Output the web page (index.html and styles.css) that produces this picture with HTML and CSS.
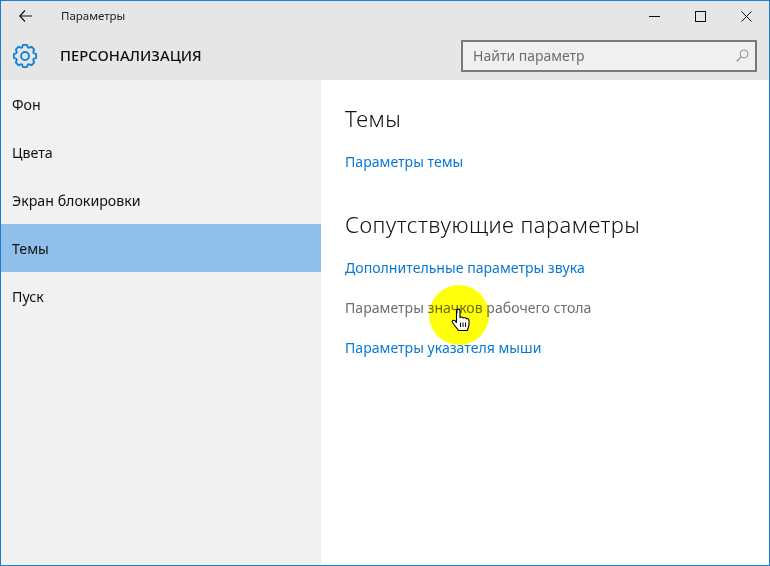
FILE: index.html
```html
<!DOCTYPE html>
<html lang="ru">
<head>
    <meta charset="UTF-8">
    <title>Параметры</title>
    <link rel="stylesheet" href="styles.css">
</head>
<body>
    <div class="window">
        <header class="header">
            <div class="title-bar">
                <svg class="back-icon" width="13" height="12" viewBox="0 0 13 12"><path d="M6 .5.8 6 6 11.500M.8 6H13" fill="none" stroke="#111" stroke-width="1.100"/></svg>
                <span class="app-title">Параметры</span>
                <div class="win-buttons">
                    <div class="win-btn"><svg width="11" height="11" viewBox="0 0 11 11"><path d="M0 5.500h11" stroke="#111" stroke-width="1"/></svg></div>
                    <div class="win-btn"><svg width="11" height="11" viewBox="0 0 11 11"><rect x=".5" y=".5" width="10" height="10" fill="none" stroke="#111"/></svg></div>
                    <div class="win-btn"><svg width="11" height="11" viewBox="0 0 11 11"><path d="M.5.5l10 10M10.500.5l-10 10" stroke="#111" stroke-width="1"/></svg></div>
                </div>
            </div>
            <div class="page-bar">
                <svg class="gear-icon" width="24" height="24" viewBox="0 0 24 24">
                    <defs><path id="tooth" d="M8.750 4.150 10.040.87h3.920l1.290 3.280"/></defs>
                    <g fill="none" stroke="#0f7fd8" stroke-width="1.800" stroke-linejoin="round">
                        <use href="#tooth"/>
                        <use href="#tooth" transform="rotate(45 12 12)"/>
                        <use href="#tooth" transform="rotate(90 12 12)"/>
                        <use href="#tooth" transform="rotate(135 12 12)"/>
                        <use href="#tooth" transform="rotate(180 12 12)"/>
                        <use href="#tooth" transform="rotate(225 12 12)"/>
                        <use href="#tooth" transform="rotate(270 12 12)"/>
                        <use href="#tooth" transform="rotate(315 12 12)"/>
                        <circle cx="12" cy="12" r="4"/>
                    </g>
                </svg>
                <h1 class="page-title">ПЕРСОНАЛИЗАЦИЯ</h1>
                <div class="search-box">
                    <span class="search-text">Найти параметр</span>
                    <svg width="13" height="13" viewBox="0 0 14 14"><circle cx="8.700" cy="5.300" r="4.300" fill="none" stroke="#8a8a8a"/><path d="M5.500 8.500.8 13.200" stroke="#8a8a8a" stroke-width="1.200"/></svg>
                </div>
            </div>
        </header>
        <div class="main">
            <nav class="sidebar">
                <div class="nav-item">Фон</div>
                <div class="nav-item">Цвета</div>
                <div class="nav-item">Экран блокировки</div>
                <div class="nav-item active">Темы</div>
                <div class="nav-item">Пуск</div>
            </nav>
            <section class="content">
                <h2 class="section-title">Темы</h2>
                <a class="link">Параметры темы</a>
                <h2 class="section-title related">Сопутствующие параметры</h2>
                <a class="link">Дополнительные параметры звука</a>
                <a class="link hovered">Параметры значков рабочего стола</a>
                <a class="link">Параметры указателя мыши</a>
            </section>
        </div>
        <div class="cursor-spot">
            <svg width="20" height="24" viewBox="0 0 20 24"><path d="M5.500 2.500C5.500.7 9 .7 9 2.500v7c1.500-.8 3-.6 3.300.5 1.200-.6 2.800-.3 3 .8 1-.4 2.500 0 2.700 1.200V17l-1.600 5.500H7.500l-6-8c-1-1.600 1-3 2.300-1.800l1.700 1.800z" fill="#fff" stroke="#000" stroke-width="1.100" stroke-linejoin="round"/><path d="M9.500 14.500v4.500M12 14.500v4.500M14.500 14.500v4.500" stroke="#000"/></svg>
        </div>
    </div>
</body>
</html>
```

FILE: styles.css
```css
* {
    box-sizing: border-box;
}

body {
    margin: 0;
    font-family: "Noto Sans", sans-serif;
    color: #111;
}

.window {
    position: relative;
    width: 770px;
    height: 566px;
    border: 1px solid #1a7fd4;
    display: flex;
    flex-direction: column;
    overflow: hidden;
    background: white;
}

.header {
    height: 79px;
    background: #e6e6e6;
    flex-shrink: 0;
}

.title-bar {
    height: 30px;
    display: flex;
    align-items: center;
}

.back-icon {
    margin-left: 18px;
}

.app-title {
    margin: 0 0 2px 29px;
    font-size: 11.500px;
    color: #222;
}

.win-buttons {
    margin-left: auto;
    display: flex;
}

.win-btn {
    width: 46px;
    height: 30px;
    display: flex;
    align-items: center;
    justify-content: center;
}

.page-bar {
    height: 49px;
    display: flex;
    align-items: flex-start;
}

.gear-icon {
    margin: 13px 0 0 12px;
}

.page-title {
    margin: 14px 0 0 23px;
    font-size: 14.800px;
    line-height: 20px;
    font-weight: 500;
    color: #111;
}

.search-box {
    margin: 9px 12px 0 auto;
    width: 296px;
    height: 32px;
    border: 2px solid #7a7a7a;
    background: #f0f0f0;
    display: flex;
    align-items: center;
    justify-content: space-between;
    padding: 0 6px 2px 10px;
}

.search-text {
    font-size: 14px;
    color: #6d6d6d;
}

.main {
    flex: 1;
    display: flex;
}

.sidebar {
    width: 320px;
    background: #f1f1f1;
}

.nav-item {
    height: 48px;
    padding-left: 11px;
    display: flex;
    align-items: center;
    font-size: 14.200px;
    color: #111;
}

.nav-item.active {
    background: #90c0e9;
}

.content {
    flex: 1;
    padding: 23px 0 0 24px;
    display: flex;
    flex-direction: column;
    align-items: flex-start;
}

.section-title {
    margin: 0;
    font-size: 22px;
    line-height: 30px;
    font-weight: 300;
    letter-spacing: 0.45px;
    color: #111;
}

.section-title.related {
    margin-top: 27px;
}

.link {
    height: 40px;
    line-height: 40px;
    font-size: 14.100px;
    color: #0a78d2;
}

.section-title + .link {
    margin-top: 9px;
}

.link.hovered {
    color: #6d6d6d;
}

.cursor-spot {
    position: absolute;
    left: 428px;
    top: 284px;
    width: 60px;
    height: 60px;
    border-radius: 50%;
    background: rgba(255, 255, 0, 0.95);
    mix-blend-mode: multiply;
    display: flex;
    align-items: center;
    justify-content: center;
    padding: 10px 0 0 4px;
}
```
